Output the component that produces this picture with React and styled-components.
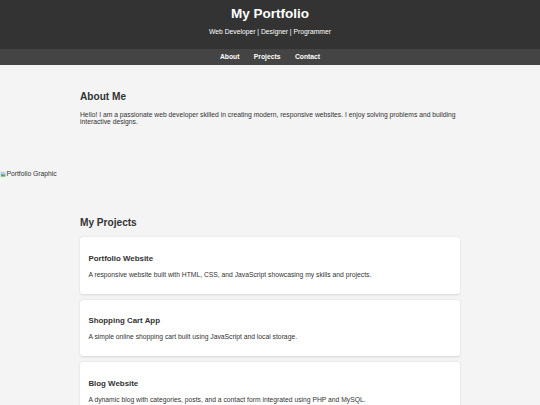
import React from "react";
import styled, { createGlobalStyle } from "styled-components";

const GlobalStyle = createGlobalStyle`
  html, body {
    margin: 0;
    padding: 0;
    background: #f4f4f4;
  }
  body {
    font-family: "Liberation Sans", Arial, Helvetica, sans-serif;
    font-size: 6.75px;
    line-height: 7.76px;
    color: #333;
  }
`;

const Header = styled.header`
  background: #333;
  color: #fff;
  text-align: center;
  padding: 5.8px 0 6.75px;
`;

const Title = styled.h1`
  margin: 0;
  font-size: 13.5px;
  font-weight: bold;
  line-height: 15.5px;
`;

const Tagline = styled.p`
  margin: 6.75px 0;
  font-size: 6.75px;
  line-height: 7.76px;
`;

const Nav = styled.nav`
  background: #444;
  padding: 3.8px 0;
  display: flex;
  justify-content: center;
  gap: 14.4px;
`;

const NavLink = styled.a`
  color: #fff;
  text-decoration: none;
  font-weight: bold;
  font-size: 6.75px;
  line-height: 7.76px;
`;

const Section = styled.section`
  max-width: 380px;
  margin: 0 auto;
  padding: 17.6px 0;
`;

const SectionTitle = styled.h2`
  font-size: 10.125px;
  margin: 8.4px 0;
  line-height: 11.64px;
  color: #333;
`;

const Text = styled.p`
  margin: 6.75px 0;
  font-size: 6.75px;
  line-height: 7.76px;
`;

const Figure = styled.div`
  display: flex;
  align-items: center;
  margin: 19.7px 0 13.4px;
  font-size: 6.75px;
  line-height: 7.76px;
  color: #333;
`;

const BrokenIcon = styled.svg`
  width: 6.2px;
  height: 6.75px;
  flex: none;
  margin-right: 0.2px;
`;

const Card = styled.article`
  background: #fff;
  padding: 8.4px;
  border-radius: 3px;
  box-shadow: 0 0.8px 2.2px rgba(0, 0, 0, 0.12);
  margin-bottom: 6.33px;
`;

const CardTitle = styled.h3`
  margin: 7.9px 0;
  font-size: 7.9px;
  line-height: 9.08px;
  color: #333;
`;

const projects = [
  {
    title: "Portfolio Website",
    text: "A responsive website built with HTML, CSS, and JavaScript showcasing my skills and projects.",
  },
  {
    title: "Shopping Cart App",
    text: "A simple online shopping cart built using JavaScript and local storage.",
  },
  {
    title: "Blog Website",
    text: "A dynamic blog with categories, posts, and a contact form integrated using PHP and MySQL.",
  },
];

export default function App() {
  return (
    <>
      <GlobalStyle />
      <Header>
        <Title>My Portfolio</Title>
        <Tagline>Web Developer | Designer | Programmer</Tagline>
      </Header>
      <Nav>
        <NavLink href="#about">About</NavLink>
        <NavLink href="#projects">Projects</NavLink>
        <NavLink href="#contact">Contact</NavLink>
      </Nav>
      <Section id="about">
        <SectionTitle>About Me</SectionTitle>
        <Text>
          Hello! I am a passionate web developer skilled in creating modern,
          responsive websites. I enjoy solving problems and building
          interactive designs.
        </Text>
      </Section>
      <Figure role="img" aria-label="Portfolio Graphic">
        <BrokenIcon viewBox="0 0 16 16" aria-hidden="true">
          <path d="M1.5 1.5h10l3 3v10h-13z" fill="#f2f6f8" stroke="#b9c2c8" strokeWidth="1" />
          <path d="M2.5 2.5h8.5v2.5h2.5v5h-11z" fill="#9cc3e6" />
          <path d="M2.5 13.5v-3.5c2-2.2 4-2.6 6-1.2 1.8 1.2 3.4 1 5 -0.2v4.9z" fill="#5aa54a" />
          <circle cx="6" cy="5.5" r="1.3" fill="#eef6fb" />
        </BrokenIcon>
        <span>Portfolio Graphic</span>
      </Figure>
      <Section id="projects">
        <SectionTitle>My Projects</SectionTitle>
        {projects.map((p) => (
          <Card key={p.title}>
            <CardTitle>{p.title}</CardTitle>
            <Text>{p.text}</Text>
          </Card>
        ))}
      </Section>
    </>
  );
}
